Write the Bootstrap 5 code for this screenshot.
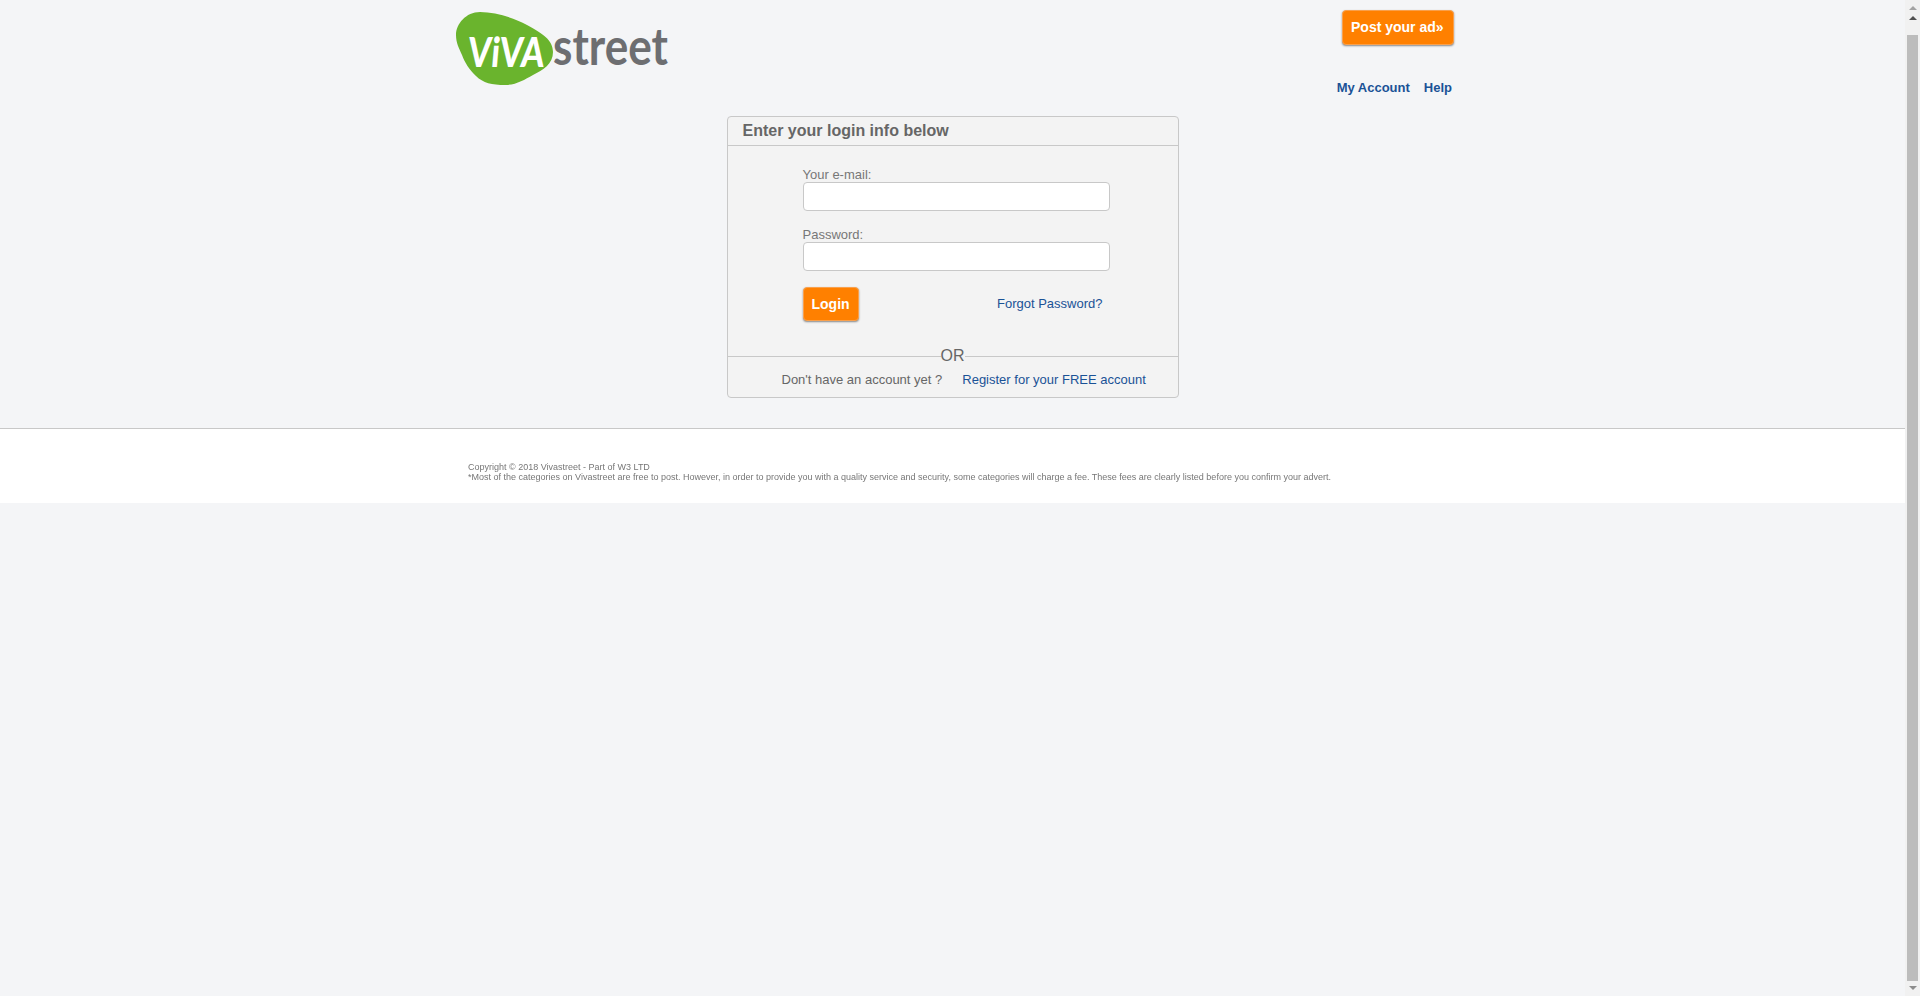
<!DOCTYPE html>
<html lang="en">
<head>
  <meta charset="UTF-8" />
  <title>Login</title>
  <link href="https://cdn.jsdelivr.net/npm/bootstrap@5.3.0/dist/css/bootstrap.min.css" rel="stylesheet" />
  <style>
    html, body { height: 996px; overflow: hidden; }
    body { background: #f4f5f7; font-family: "Liberation Sans", Arial, sans-serif; font-size: 13px; color: #666; }
    a { color: #1a5296; text-decoration: none; }
    .page-col { width: 1905px; }
    .head-wrap { width: 1003px; height: 116px; margin: 0 auto; padding-left: 5px; }
    .logo-box { padding-top: 10px; }
    .logo-box svg { display: block; }
    .head-links { font-weight: 700; font-size: 13px; gap: 14px; padding-right: 2px; margin-top: 35px; line-height: 15px; }
    .btn.btn-orange { background: #ff8000; color: #fff; border: 1px solid #f9a04c; border-radius: 4px; font-weight: 700; font-size: 14px; line-height: 16px; box-shadow: 0 1px 2px rgba(0,0,0,.45); }
    .btn-post { padding: 8px 8px; height: 35px; margin-top: 10px; width: 112px; white-space: nowrap; text-align: left; }
    .btn-login { padding: 8px 8px; height: 34px; width: 56px; }
    .login-box { width: 452px; height: 282px; margin: 0 auto; background: #f3f3f3; border: 1px solid #c8c8c8; border-radius: 4px; }
    .box-title { height: 29px; border-bottom: 1px solid #c8c8c8; padding-left: 15px; font-size: 16px; font-weight: 700; line-height: 27px; color: #666; }
    .box-form { padding: 21px 0 0 75px; width: 382px; }
    .box-form label { display: block; line-height: 15px; color: #777; }
    .box-form .form-control { height: 29px; border: 1px solid #c8c8c8; border-radius: 4px; padding: 2px 6px; background: #fff; box-shadow: none; margin-bottom: 16px; }
    .forgot-link { margin-right: 7px; }
    .or-row { margin-top: 26px; font-size: 16px; line-height: 18px; color: #666; }
    .or-row::before, .or-row::after { content: ""; flex: 1; border-top: 1px solid #c8c8c8; }
    .reg-row { padding: 7px 0 0 54px; gap: 20px; line-height: 15px; }
    .site-foot { margin-top: 30px; height: 75px; background: #fff; border-top: 1px solid #c8c8c8; padding: 33px 0 0 468px; font-size: 9px; line-height: 10px; color: #777; filter: grayscale(1); }
    .fake-scroll { width: 15px; height: 996px; background: #f1f1f1; }
    .tri-up, .tri-down { width: 0; height: 0; border-left: 4px solid transparent; border-right: 4px solid transparent; margin: 0 auto; }
    .tri-up { border-bottom: 4px solid #a3a3a3; margin-top: 6px; }
    .tri-up.is-dark { border-bottom-color: #505050; margin-top: 6px; }
    .tri-down { border-top: 4px solid #8c8c8c; margin-top: 5px; }
    .scroll-thumb { width: 11px; height: 946px; margin: 15px auto 0 2px; background: #bcbcbc; }
  </style>
</head>
<body>
<div class="d-flex">
  <div class="page-col">
    <header class="head-wrap d-flex justify-content-between">
      <a href="#" class="logo-box">
        <svg width="214" height="78" viewBox="0 0 214 78" role="img" aria-label="Vivastreet">
          <path d="M24 2C40 2 58 8 71 15C86 23 97 30 97 42C97 54 87 60 77 65C68 70 60 75 49 75C36 75 27 73 20 66C13 59 9 53 6 45C3 38 0 33 0 25C0 14 10 2 24 2Z" fill="#6ab42d"/>
          <g transform="translate(11 57) skewX(-5) scale(1 1.25)">
            <text x="0" y="0" font-family="Lato" font-weight="900" font-size="33" fill="#fff">ViVA</text>
          </g>
          <text x="97" y="55" font-family="Lato" font-weight="700" font-size="52" fill="#6d6e71" textLength="115" lengthAdjust="spacingAndGlyphs">street</text>
        </svg>
      </a>
      <div class="d-flex flex-column align-items-end">
        <a href="#" class="btn btn-orange btn-post">Post your ad»</a>
        <div class="head-links d-flex">
          <a href="#">My Account</a>
          <a href="#">Help</a>
        </div>
      </div>
    </header>

    <main class="login-box">
      <div class="box-title">Enter your login info below</div>
      <form class="box-form">
        <label for="email">Your e-mail:</label>
        <input type="text" id="email" class="form-control" />
        <label for="pass">Password:</label>
        <input type="password" id="pass" class="form-control" />
        <div class="d-flex justify-content-between align-items-center">
          <button type="button" class="btn btn-orange btn-login">Login</button>
          <a href="#" class="forgot-link">Forgot Password?</a>
        </div>
      </form>
      <div class="or-row d-flex align-items-center">OR</div>
      <div class="reg-row d-flex">
        <span>Don't have an account yet ?</span>
        <a href="#">Register for your FREE account</a>
      </div>
    </main>

    <footer class="site-foot">
      Copyright © 2018 Vivastreet - Part of W3 LTD<br />
      *Most of the categories on Vivastreet are free to post. However, in order to provide you with a quality service and security, some categories will charge a fee. These fees are clearly listed before you confirm your advert.
    </footer>
  </div>

  <div class="fake-scroll">
    <div class="tri-up"></div>
    <div class="tri-up is-dark"></div>
    <div class="scroll-thumb"></div>
    <div class="tri-down"></div>
  </div>
</div>
<script src="https://cdn.jsdelivr.net/npm/bootstrap@5.3.0/dist/js/bootstrap.bundle.min.js"></script>
</body>
</html>
